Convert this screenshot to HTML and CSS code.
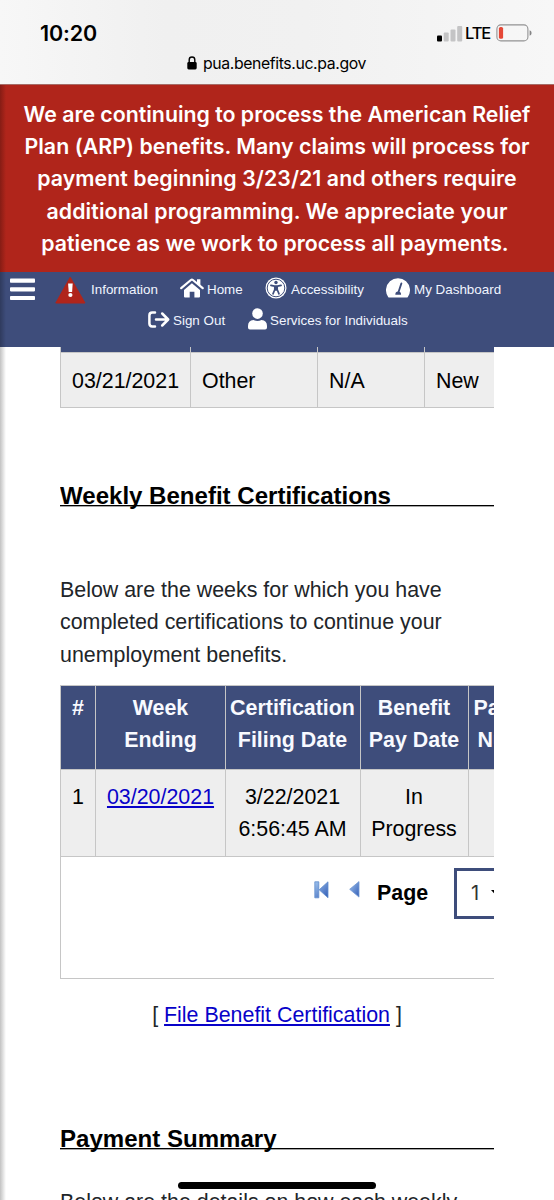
FILE: index.html
```html
<!DOCTYPE html>
<html lang="en">
<head>
<meta charset="utf-8">
<meta name="viewport" content="width=device-width, initial-scale=1">
<title>Benefit Certifications</title>
<link rel="stylesheet" href="styles.css">
</head>
<body>
<div class="screen">
  <header class="browser">
    <div class="status">
      <span class="time">10:20</span>
      <div class="indicators">
        <svg class="signal" width="26" height="17" viewBox="0 0 26 17"><rect x="0" y="10.5" width="5" height="6" rx="1"/><g fill="#c4c4c5"><rect x="6.7" y="7.5" width="5" height="9" rx="1"/><rect x="13.5" y="4.4" width="5" height="12.1" rx="1"/><rect x="20.2" y="1" width="5" height="15.5" rx="1"/></g></svg>
        <span class="lte">LTE</span>
        <svg class="battery" width="36" height="18" viewBox="0 0 36 18"><rect x=".9" y=".9" width="31" height="16" rx="4" fill="none" stroke="#929293" stroke-width="1.1"/><rect x="2.9" y="3" width="4.2" height="11.8" rx="1.6" fill="#e54736"/><path d="M33.6 6.3q2 .7 2 2.7t-2 2.7z" fill="#858586"/></svg>
      </div>
    </div>
    <div class="address">
      <svg class="lock" width="10" height="14" viewBox="0 0 10 14"><rect x=".3" y="6" width="9.4" height="7.5" rx="1.4"/><path d="M2.2 7V3.8a2.8 2.8 0 0 1 5.6 0V7" fill="none" stroke="#000" stroke-width="1.4"/></svg>
      <span class="url">pua.benefits.uc.pa.gov</span>
    </div>
  </header>

  <section class="banner">
    <div class="b1">We are continuing to process the American Relief</div>
    <div class="b2">Plan (ARP) benefits. Many claims will process for</div>
    <div class="b3">payment beginning 3/23/21 and others require</div>
    <div class="b4">additional programming. We appreciate your</div>
    <div class="b5">patience as we work to process all payments.</div>
  </section>

  <nav class="nav">
    <div class="nav-row">
      <svg class="menu" width="25" height="23" viewBox="0 0 25 23" fill="#fff"><rect y=".5" width="25" height="4.2" rx=".8"/><rect y="9.2" width="25" height="4.2" rx=".8"/><rect y="17.9" width="25" height="4.2" rx=".8"/></svg>
      <svg class="alert" width="31" height="28" viewBox="0 0 31 28"><path d="M15.2 1.2 30 27H.8z" fill="#b0251b" stroke="#b0251b" stroke-linejoin="round"/><path d="M13.1 7.5h4.600l-.6 8.500h-3.400z" fill="#fff"/><circle cx="15.4" cy="19" r="2.1" fill="#fff"/></svg>
      <a class="label info">Information</a>
      <svg class="home" width="24" height="20" viewBox="0 0 24 20" fill="#fff"><path d="M11.9 5.200 20 12v6.600q0 1-1 1h-4.600v-5.800H9.700v5.800H5q-1 0-1-1V12z"/><path d="M1.200 10.200 10.900 2q1-.8 2 0L22.700 10.200" fill="none" stroke="#fff" stroke-width="2.200" stroke-linecap="round"/><path d="M17 1.300h3.400v6.600L17 5z"/></svg>
      <a class="label home-label">Home</a>
      <svg class="access" width="22" height="22" viewBox="0 0 22 22"><circle cx="11" cy="11" r="10.5" fill="#fff"/><circle cx="11" cy="11" r="8.8" fill="none" stroke="#3e4d7b" stroke-width="1"/><circle cx="11" cy="5.500" r="1.700" fill="#3e4d7b"/><path d="m5.900 8.300 3.600.8h3l3.600-.8M9.800 9.500v3L8 16.800M12.200 9.500v3l1.800 4.300M11 9v4" fill="none" stroke="#3e4d7b" stroke-width="1.700" stroke-linecap="round" stroke-linejoin="round"/></svg>
      <a class="label access-label">Accessibility</a>
      <svg class="gauge" width="24" height="20" viewBox="0 0 24 20"><path d="M2.300 19.200A12 12 0 1 1 21.700 19.200Q21.300 19.600 20.500 19.600H3.500Q2.700 19.600 2.300 19.200z" fill="#fff"/><path d="m15.400 5.400-3.200 9.600" stroke="#3e4d7b" stroke-width="1.800" stroke-linecap="round"/><path d="M9.300 16.700q0-3.200 2.900-3.200t2.900 3.200z" fill="#3e4d7b"/></svg>
      <a class="label dashboard-label">My Dashboard</a>
    </div>
    <div class="nav-row second">
      <svg class="signout" width="22" height="17" viewBox="0 0 22 17" fill="none" stroke="#fff" stroke-width="2.5" stroke-linecap="round" stroke-linejoin="round"><path d="M7 1.500H4.300Q1.400 1.500 1.400 4.400v8.200q0 2.900 2.900 2.900H7M8 8.500h12M14.200 2.500l6 6-6 6"/></svg>
      <a class="label signout-label">Sign Out</a>
      <svg class="person" width="19" height="22" viewBox="0 0 19 22" fill="#fff"><circle cx="9.5" cy="5.6" r="5.3"/><path d="M5.500 12q4 1.800 8 0Q19 12.400 19 18v1.600q0 1.900-1.900 1.900H1.900Q0 21.500 0 19.600V18Q0 12.400 5.500 12z"/></svg>
      <a class="label services-label">Services for Individuals</a>
    </div>
  </nav>

  <main class="content">
    <table class="grid claims">
      <colgroup><col class="w130"><col class="w127"><col class="w107"><col class="w130"></colgroup>
      <tr class="stub"><th></th><th></th><th></th><th></th></tr>
      <tr><td>03/21/2021</td><td>Other</td><td>N/A</td><td>New</td></tr>
    </table>

    <h2 class="title certifications"><span>Weekly Benefit Certifications</span></h2>

    <p class="intro">Below are the weeks for which you have<br>completed certifications to continue your<br>unemployment benefits.</p>

    <table class="grid weeks">
      <colgroup><col class="w35"><col class="w130"><col class="w135"><col class="w108"><col class="w100"></colgroup>
      <tr><th>#</th><th>Week<br>Ending</th><th>Certification<br>Filing Date</th><th>Benefit<br>Pay Date</th><th>Payment<br>Number</th></tr>
      <tr><td>1</td><td><a class="link">03/20/2021</a></td><td>3/22/2021<br>6:56:45 AM</td><td>In<br>Progress</td><td></td></tr>
    </table>
    <div class="pager">
      <svg class="first" width="16" height="18" viewBox="0 0 16 18"><defs><linearGradient id="blue" x2="1" y2="1"><stop stop-color="#9fc3ed"/><stop offset="1" stop-color="#315cb6"/></linearGradient></defs><path d="M.8.8h4v16h-4zM14 .8v16L5.200 8.800z" fill="url(#blue)" stroke="#608dcd" stroke-width=".8"/></svg>
      <svg class="previous" width="11" height="17" viewBox="0 0 11 17"><path d="M10 .6v15.500L.700 8.300z" fill="url(#blue)" stroke="#7399d3" stroke-width=".8"/></svg>
      <b class="page">Page</b>
      <div class="select"><span>1</span><svg width="9" height="5" viewBox="0 0 9 5"><path d="M0 0h9L4.500 5z"/></svg></div>
    </div>
    <p class="file">[ <a class="link">File Benefit Certification</a> ]</p>
    <h2 class="title summary"><span>Payment Summary</span></h2>
    <p class="details">Below are the details on how each weekly</p>
  </main>
  <div class="edge"></div>
  <div class="home-indicator"></div>
</div>
</body>
</html>
```
FILE: styles.css
```css
* { box-sizing: border-box; }
body { margin: 0; background: #fff; }
.screen { position: relative; width: 554px; height: 1200px; overflow: hidden; background: #fff; color: #000; font-family: "Liberation Sans", Arial, sans-serif; font-size: 21.4px; line-height: 32.2px; }
svg { display: block; flex: none; }
p, h2 { margin: 0; }
.browser { height: 85px; border-bottom: 1px solid #a66b66; background: linear-gradient(90deg, #f7f7f7, #f0f0f0 30%, #f1f1f1 55%, #f7f7f7); font-family: Inter, sans-serif; }
.status { display: flex; justify-content: space-between; height: 50px; padding: 17px 23px 0 40px; }
.time { font-size: 21.5px; font-weight: 600; letter-spacing: -.1px; line-height: 32px; }
.indicators { display: flex; padding-top: 8px; }
.lte { width: 26px; margin-left: 2px; font-size: 16.5px; font-weight: 500; letter-spacing: -1.1px; line-height: 17px; }
.battery { margin-left: 5px; margin-right: -1px; margin-top: -1px; }
.address { display: flex; padding-left: 187px; }
.lock { margin-top: 6px; }
.url { margin-left: 6px; font-size: 15.8px; line-height: 27px; letter-spacing: -.38px; white-space: nowrap; }
.banner { height: 187px; padding-top: 13px; background: #b0251b; color: #fff; font-family: Inter, sans-serif; font-size: 21.3px; font-weight: 600; text-align: center; white-space: nowrap; }
.banner div { display: flex; justify-content: center; }
.b2 { letter-spacing: .06px; }
.b3 { letter-spacing: .07px; }
.b4 { letter-spacing: .1px; }
.banner .b5 { padding-right: 4px; }
.nav { height: 75px; padding: 5px 0 0 10px; background: #3e4d7b; color: #f1f5ff; font-size: 13.4px; line-height: 18px; }
.nav-row { display: flex; height: 30px; white-space: nowrap; }
.label { margin-top: 4px; }
.menu { margin-top: 1px; }
.alert { margin: -1px 0 0 20px; }
.info { width: 67px; margin-left: 5px; }
.home { margin: 1px 0 0 22px; }
.home-label { width: 36px; margin-left: 3px; }
.access { margin-left: 22px; }
.access-label { width: 73px; margin-left: 4px; }
.gauge { margin: 1px 0 0 22px; }
.dashboard-label { margin-left: 4px; }
.second { padding-left: 138px; }
.signout { margin-top: 4px; }
.signout-label { width: 53px; margin-left: 3px; margin-top: 5px; }
.person { margin: 1px 0 0 22px; }
.services-label { margin-left: 3px; margin-top: 5px; }
.content { width: 434px; margin-left: 60px; overflow: hidden; }
.grid { border-collapse: collapse; table-layout: fixed; }
.w35 { width: 35px; }
.w100 { width: 100px; }
.w107 { width: 107px; }
.w108 { width: 108px; }
.w127 { width: 127px; }
.w130 { width: 130px; }
.w135 { width: 135px; }
.grid th, .grid td { padding: 0; border: 1px solid #c6c6c6; vertical-align: top; }
.grid th { background: #3e4d7b; color: #f8faff; }
.grid td { background: #eee; font-weight: 400; }
.claims { width: 494px; }
.claims .stub th { height: 5px; border-top: 0; }
.claims td { height: 55px; padding: 12px 0 0 11px; }
.weeks { width: 508px; text-align: center; }
.weeks th { height: 84px; padding: 6px 0 0; }
.weeks td { height: 87px; padding: 11px 0 0; }
.weeks th:nth-child(n+3), .weeks td:nth-child(n+3) { padding-right: 1px; }
.title { display: flex; height: 24px; border-bottom: 1px solid #000; font-size: 24.05px; line-height: 27px; white-space: nowrap; }
.certifications { margin-top: 74px; box-shadow: 0 1px 0 rgba(0, 0, 0, .35); }
.intro { height: 111px; margin-top: 68px; color: #212529; line-height: 32.5px; }
.link { color: #0802c9; text-decoration: underline; text-decoration-thickness: 1.5px; text-underline-offset: 2px; }
.pager { display: flex; width: 508px; height: 122px; padding: 11px 0 0 253px; border: solid #c6c6c6; border-width: 0 0 1px 1px; }
.first { margin-top: 13px; }
.previous { margin: 13px 0 0 19px; }
.page { width: 52px; margin: 9px 0 0 17px; }
.select { display: flex; flex: none; width: 90px; height: 51px; margin-left: 25px; padding: 6px 0 0 14px; border: 3px solid #3e4d7b; font-family: Inter, sans-serif; font-size: 20px; color: #333; }
.select svg { margin: 13px 0 0 12px; }
.file { margin-top: 20px; text-align: center; color: #212529; }
.summary { margin-top: 94px; box-shadow: 0 1px 0 rgba(0, 0, 0, .35); }
.details { margin-top: 37px; color: #212529; white-space: nowrap; }
.edge { position: absolute; left: 0; top: 85px; width: 6px; bottom: 0; background: linear-gradient(90deg, rgba(0,0,0,.24), rgba(0,0,0,0)); }
.home-indicator { position: absolute; left: 178px; top: 1182px; width: 198px; height: 7px; border-radius: 4px; background: #000; }
```
